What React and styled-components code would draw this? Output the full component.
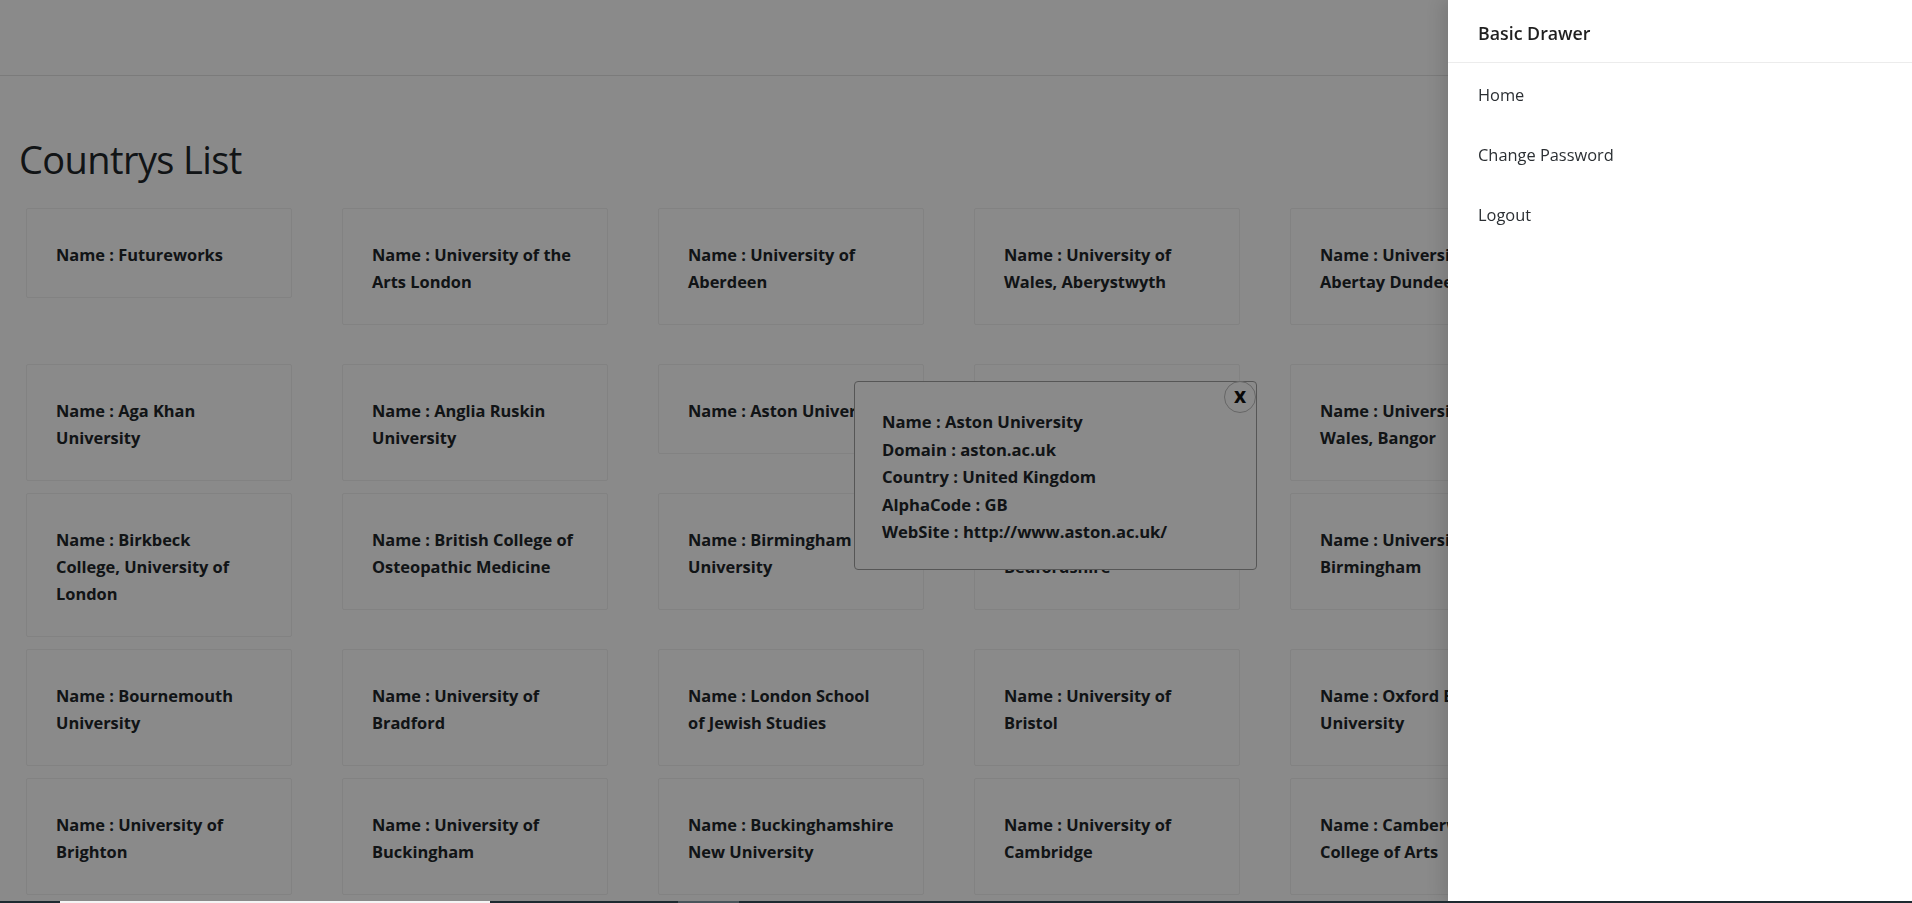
import styled, { createGlobalStyle } from "styled-components";

const GlobalStyle = createGlobalStyle`
  * {
    box-sizing: border-box;
  }
  body {
    margin: 0;
    background: #fff;
    color: #212529;
    font-family: "Open Sans", "Noto Sans", sans-serif;
  }
`;

const Page = styled.div`
  min-height: 100vh;
  overflow: hidden;
`;

const Header = styled.header`
  height: 76px;
  border-bottom: 1px solid #e4e4e4;
`;

const Main = styled.main`
  position: relative;
  padding: 0 0 40px 26px;
`;

const Title = styled.h1`
  margin: 0;
  padding: 59px 0 25px 0;
  margin-left: -7px;
  font-size: 38px;
  font-weight: 500;
  line-height: 48px;
  letter-spacing: -0.6px;
  color: #212529;
`;

const Grid = styled.div`
  display: grid;
  grid-template-columns: repeat(6, 266px);
  column-gap: 50px;
  row-gap: 12px;
  align-items: start;
`;

const Card = styled.div`
  border: 1px solid #f0f0f0;
  border-radius: 2px;
  padding: 32px 29px 29px;
  font-size: 16.4px;
  font-weight: 700;
  line-height: 27px;
  color: #212529;
`;

const Line = styled.div`
  white-space: nowrap;
`;

const Modal = styled.div`
  position: absolute;
  left: 854px;
  top: 305px;
  width: 403px;
  min-height: 188px;
  padding: 26px 27px 23px;
  background: #fff;
  border: 1px solid #a0a0a0;
  border-radius: 4px;
  font-size: 16.6px;
  font-weight: 700;
  line-height: 27.5px;
`;

const CloseButton = styled.button`
  position: absolute;
  top: -1px;
  right: 0;
  width: 32px;
  height: 32px;
  padding: 0 0 3px;
  border: 1px solid #bdbdbd;
  border-radius: 50%;
  background: #fff;
  color: #111;
  font-family: "Open Sans", sans-serif;
  font-size: 21px;
  font-weight: 700;
  line-height: 1;
  cursor: pointer;
`;

const Mask = styled.div`
  position: fixed;
  inset: 0;
  background: rgba(0, 0, 0, 0.46);
`;

const Drawer = styled.aside`
  position: fixed;
  top: 0;
  right: 0;
  bottom: 0;
  width: 464px;
  background: #fff;
  box-shadow: -6px 0 16px rgba(0, 0, 0, 0.12);
`;

const DrawerHeader = styled.div`
  padding: 22px 30px 18px;
  border-bottom: 1px solid #ececec;
  font-size: 17.8px;
  font-weight: 600;
  line-height: 22px;
  color: #1f1f1f;
`;

const DrawerBody = styled.nav`
  padding-top: 19px;
`;

const MenuItem = styled.a`
  display: block;
  height: 60px;
  padding: 0 30px;
  font-size: 16.4px;
  line-height: 26px;
  color: #2b2f33;
  text-decoration: none;
  cursor: pointer;
`;

const Taskbar = styled.div`
  position: fixed;
  left: 0;
  right: 0;
  bottom: 0;
  height: 2px;
  background: #1e2a30;
  display: flex;
`;

const TaskSlot = styled.span`
  margin-left: ${(p) => p.offset}px;
  width: ${(p) => p.w}px;
  background: ${(p) => p.color};
`;

const universities = [
  ["Name : Futureworks"],
  ["Name : University of the", "Arts London"],
  ["Name : University of", "Aberdeen"],
  ["Name : University of", "Wales, Aberystwyth"],
  ["Name : University of", "Abertay Dundee"],
  ["Name : American", "InterContinental", "University - London"],
  ["Name : Aga Khan", "University"],
  ["Name : Anglia Ruskin", "University"],
  ["Name : Aston University"],
  ["Name : University of", "Bath"],
  ["Name : University of", "Wales, Bangor"],
  ["Name : Bath Spa", "University"],
  ["Name : Birkbeck", "College, University of", "London"],
  ["Name : British College of", "Osteopathic Medicine"],
  ["Name : Birmingham City", "University"],
  ["Name : University of", "Bedfordshire"],
  ["Name : University of", "Birmingham"],
  ["Name : University of", "Bolton"],
  ["Name : Bournemouth", "University"],
  ["Name : University of", "Bradford"],
  ["Name : London School", "of Jewish Studies"],
  ["Name : University of", "Bristol"],
  ["Name : Oxford Brookes", "University"],
  ["Name : Brunel", "University"],
  ["Name : University of", "Brighton"],
  ["Name : University of", "Buckingham"],
  ["Name : Buckinghamshire", "New University"],
  ["Name : University of", "Cambridge"],
  ["Name : Camberwell", "College of Arts"],
  ["Name : Canterbury Christ", "Church University"],
];

const selected = [
  "Name : Aston University",
  "Domain : aston.ac.uk",
  "Country : United Kingdom",
  "AlphaCode : GB",
  "WebSite : http://www.aston.ac.uk/",
];

const App = () => {
  return (
    <Page>
      <GlobalStyle />
      <Header />
      <Main>
        <Title>Countrys List</Title>
        <Grid>
          {universities.map((lines, i) => (
            <Card key={i}>
              {lines.map((l) => (
                <Line key={l}>{l}</Line>
              ))}
            </Card>
          ))}
        </Grid>
        <Modal>
          <CloseButton>x</CloseButton>
          {selected.map((l) => (
            <Line key={l}>{l}</Line>
          ))}
        </Modal>
      </Main>
      <Mask />
      <Drawer>
        <DrawerHeader>Basic Drawer</DrawerHeader>
        <DrawerBody>
          <MenuItem>Home</MenuItem>
          <MenuItem>Change Password</MenuItem>
          <MenuItem>Logout</MenuItem>
        </DrawerBody>
      </Drawer>
      <Taskbar>
        <TaskSlot offset={60} w={430} color="#f4f4f4" />
        <TaskSlot offset={188} w={61} color="#4a555b" />
      </Taskbar>
    </Page>
  );
};

export default App;
